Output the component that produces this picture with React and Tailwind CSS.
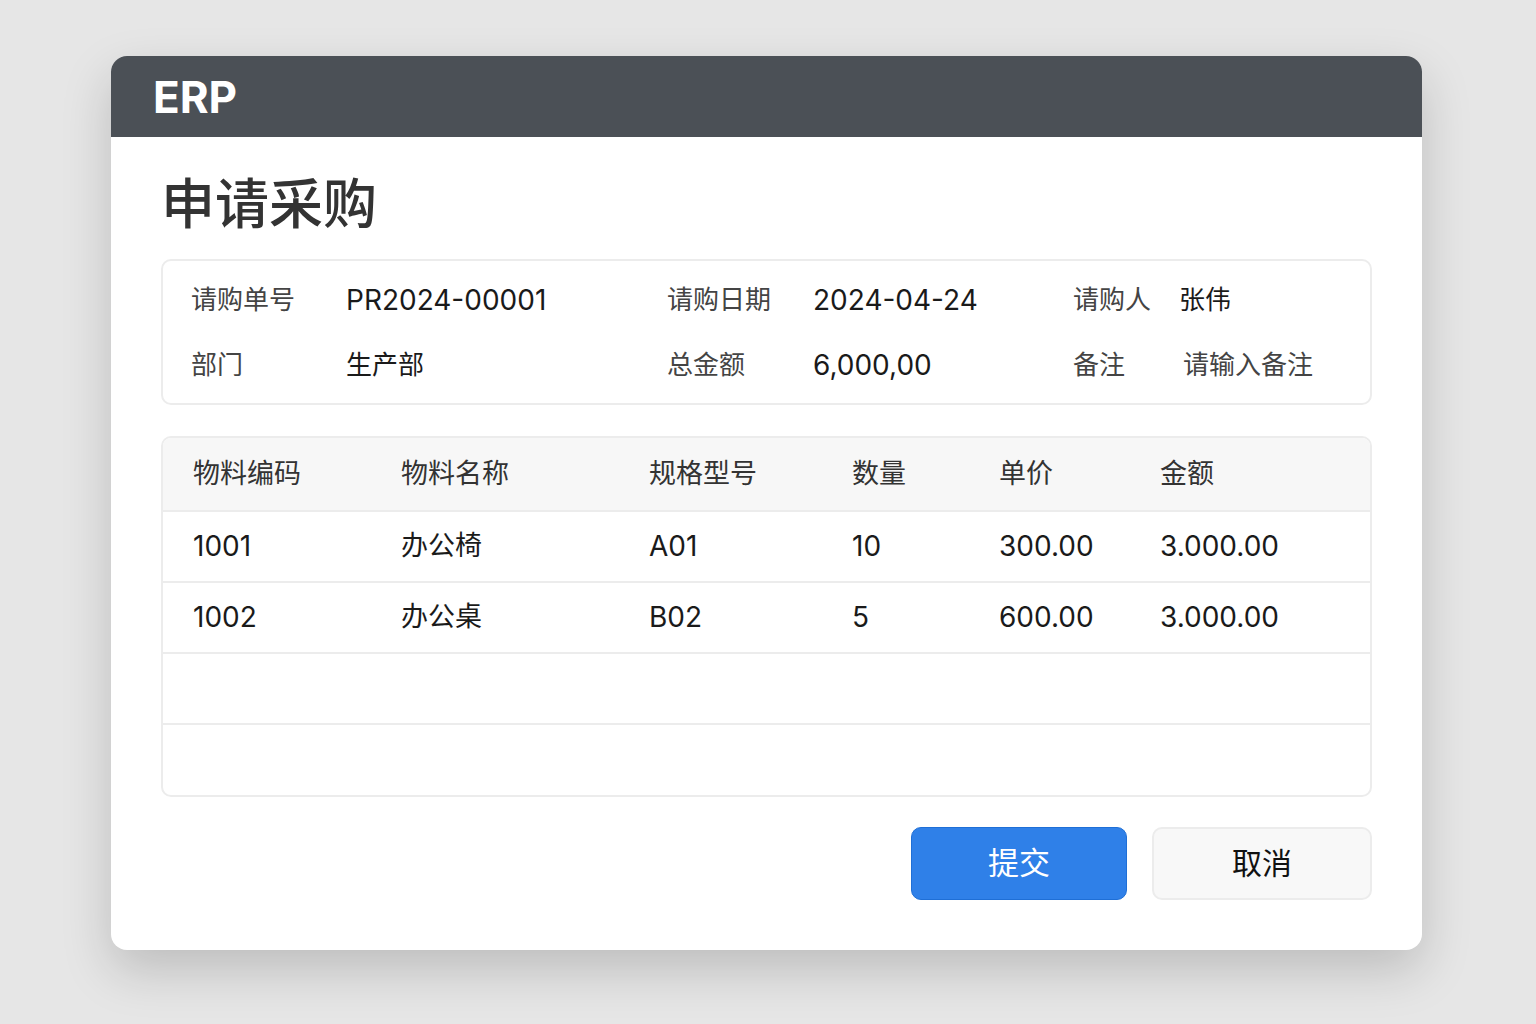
import React from 'react';

const font = { fontFamily: '"Inter", "Noto Sans CJK SC", sans-serif' };

const items = [
  { code: '1001', name: '办公椅', spec: 'A01', qty: '10', price: '300.00', amount: '3.000.00' },
  { code: '1002', name: '办公桌', spec: 'B02', qty: '5', price: '600.00', amount: '3.000.00' },
];

const cols = ['w-[238px] pl-[30px]', 'w-[248px]', 'w-[203px]', 'w-[147px]', 'w-[161px]', 'flex-1'];

// numbers in the picture run a little larger than the Chinese labels
const Num = ({ children }) => <span className="text-[28px]">{children}</span>;

const Row = ({ cells, header }) => (
  <div
    className={
      'flex items-center border-b-2 border-[#ececec] ' +
      (header ? 'h-[74px] bg-[#f7f7f7] text-[#333]' : 'h-[71px] text-[#1a1a1a]')
    }
  >
    {cells.map((c, i) => (
      <div key={i} className={cols[i]}>
        {c}
      </div>
    ))}
  </div>
);

const App = () => {
  return (
    <div className="min-h-[1024px] w-full bg-[#e6e6e6] pt-[56px]" style={font}>
      <div className="ml-[111px] w-[1311px] overflow-hidden rounded-[16px] bg-white shadow-[0_20px_50px_rgba(0,0,0,0.18)]">
        <div className="flex h-[81px] items-center bg-[#4b5056] pl-[42px]">
          <span className="text-[44px] font-bold leading-none text-white">ERP</span>
        </div>

        <div className="px-[50px] pb-[50px] pt-[41px]">
          <h1 className="mb-[27px] text-[54px] font-medium leading-none text-[#333]">申请采购</h1>

          <div className="rounded-[10px] border-2 border-[#ececec] px-[28px] py-[6px] text-[26px] text-[#1a1a1a]">
            <div className="flex h-[65px] items-center">
              <span className="w-[155px] text-[#444]">请购单号</span>
              <span className="w-[321px]"><Num>PR2024-00001</Num></span>
              <span className="w-[146px] text-[#444]">请购日期</span>
              <span className="w-[260px]"><Num>2024-04-24</Num></span>
              <span className="w-[106px] text-[#444]">请购人</span>
              <span>张伟</span>
            </div>
            <div className="flex h-[65px] items-center">
              <span className="w-[155px] text-[#444]">部门</span>
              <span className="w-[321px]">生产部</span>
              <span className="w-[146px] text-[#444]">总金额</span>
              <span className="w-[260px]"><Num>6,000,00</Num></span>
              <span className="w-[110px] text-[#444]">备注</span>
              <span className="text-[#444]">请输入备注</span>
            </div>
          </div>

          <div className="mt-[31px] overflow-hidden rounded-[10px] border-2 border-[#ececec] text-[27px]">
            <Row header cells={['物料编码', '物料名称', '规格型号', '数量', '单价', '金额']} />
            {items.map((r) => (
              <Row
                key={r.code}
                cells={[
                  <Num>{r.code}</Num>,
                  r.name,
                  <Num>{r.spec}</Num>,
                  <Num>{r.qty}</Num>,
                  <Num>{r.price}</Num>,
                  <Num>{r.amount}</Num>,
                ]}
              />
            ))}
            <Row cells={['', '', '', '', '', '']} />
            <div className="h-[70px]" />
          </div>

          <div className="mt-[30px] flex justify-end gap-[25px]">
            <button className="h-[73px] w-[216px] rounded-[10px] border border-[#1f6fd6] bg-[#2f80e8] text-[31px] text-white">
              提交
            </button>
            <button className="h-[73px] w-[220px] rounded-[10px] border-2 border-[#ececec] bg-[#f8f8f8] text-[30px] text-[#111]">
              取消
            </button>
          </div>
        </div>
      </div>
    </div>
  );
};

export default App;
